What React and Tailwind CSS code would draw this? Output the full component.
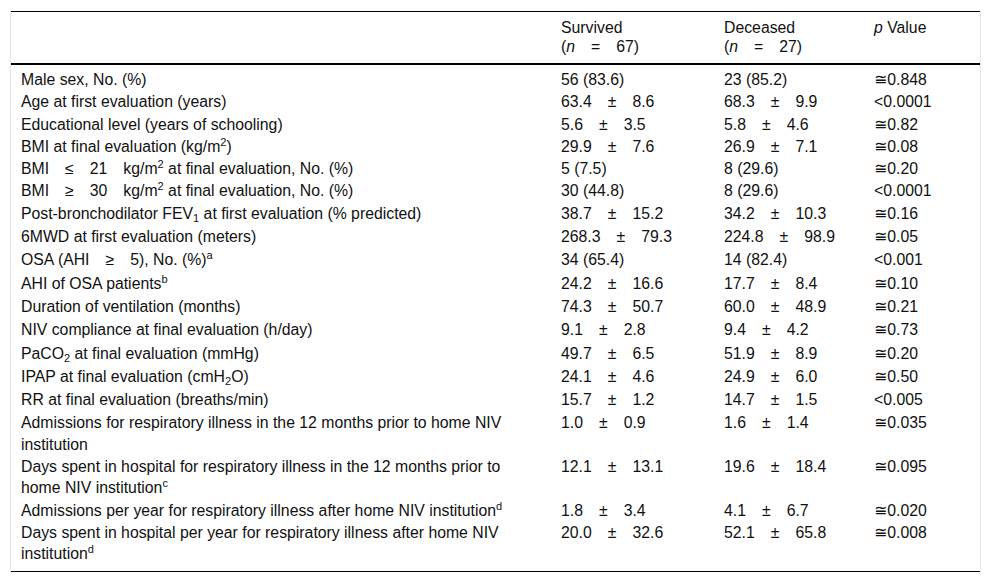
import React from "react";

const Gap = () => <span className="inline-block w-[16px]" />;

const PM = ({ a, b }) => (
  <span className="whitespace-nowrap">
    {a}
    <Gap />±<Gap />
    {b}
  </span>
);

const Sup = ({ children }) => (
  <sup className="text-[11px] relative -top-[6px] align-baseline leading-none">{children}</sup>
);
const Sub = ({ children }) => (
  <sub className="text-[11px] relative top-[3px] align-baseline leading-none">{children}</sub>
);

const rows = [
  { l: "Male sex, No. (%)", s: "56 (83.6)", d: "23 (85.2)", p: "≅0.848" },
  { l: "Age at first evaluation (years)", s: <PM a="63.4" b="8.6" />, d: <PM a="68.3" b="9.9" />, p: "<0.0001" },
  { l: "Educational level (years of schooling)", s: <PM a="5.6" b="3.5" />, d: <PM a="5.8" b="4.6" />, p: "≅0.82" },
  {
    l: (
      <>
        BMI at final evaluation (kg/m<Sup>2</Sup>)
      </>
    ),
    s: <PM a="29.9" b="7.6" />,
    d: <PM a="26.9" b="7.1" />,
    p: "≅0.08",
  },
  {
    l: (
      <>
        BMI<Gap />≤<Gap />21<Gap />kg/m<Sup>2</Sup> at final evaluation, No. (%)
      </>
    ),
    s: "5 (7.5)",
    d: "8 (29.6)",
    p: "≅0.20",
  },
  {
    l: (
      <>
        BMI<Gap />≥<Gap />30<Gap />kg/m<Sup>2</Sup> at final evaluation, No. (%)
      </>
    ),
    s: "30 (44.8)",
    d: "8 (29.6)",
    p: "<0.0001",
  },
  {
    l: (
      <>
        Post-bronchodilator FEV<Sub>1</Sub> at first evaluation (% predicted)
      </>
    ),
    s: <PM a="38.7" b="15.2" />,
    d: <PM a="34.2" b="10.3" />,
    p: "≅0.16",
  },
  { l: "6MWD at first evaluation (meters)", s: <PM a="268.3" b="79.3" />, d: <PM a="224.8" b="98.9" />, p: "≅0.05" },
  {
    l: (
      <>
        OSA (AHI<Gap />≥<Gap />5), No. (%)<Sup>a</Sup>
      </>
    ),
    s: "34 (65.4)",
    d: "14 (82.4)",
    p: "<0.001",
  },
  {
    l: (
      <>
        AHI of OSA patients<Sup>b</Sup>
      </>
    ),
    s: <PM a="24.2" b="16.6" />,
    d: <PM a="17.7" b="8.4" />,
    p: "≅0.10",
  },
  { l: "Duration of ventilation (months)", s: <PM a="74.3" b="50.7" />, d: <PM a="60.0" b="48.9" />, p: "≅0.21" },
  { l: "NIV compliance at final evaluation (h/day)", s: <PM a="9.1" b="2.8" />, d: <PM a="9.4" b="4.2" />, p: "≅0.73" },
  {
    l: (
      <>
        PaCO<Sub>2</Sub> at final evaluation (mmHg)
      </>
    ),
    s: <PM a="49.7" b="6.5" />,
    d: <PM a="51.9" b="8.9" />,
    p: "≅0.20",
  },
  {
    l: (
      <>
        IPAP at final evaluation (cmH<Sub>2</Sub>O)
      </>
    ),
    s: <PM a="24.1" b="4.6" />,
    d: <PM a="24.9" b="6.0" />,
    p: "≅0.50",
  },
  { l: "RR at final evaluation (breaths/min)", s: <PM a="15.7" b="1.2" />, d: <PM a="14.7" b="1.5" />, p: "<0.005" },
  {
    l: "Admissions for respiratory illness in the 12 months prior to home NIV institution",
    s: <PM a="1.0" b="0.9" />,
    d: <PM a="1.6" b="1.4" />,
    p: "≅0.035",
  },
  {
    l: (
      <>
        Days spent in hospital for respiratory illness in the 12 months prior to home NIV institution<Sup>c</Sup>
      </>
    ),
    s: <PM a="12.1" b="13.1" />,
    d: <PM a="19.6" b="18.4" />,
    p: "≅0.095",
  },
  {
    l: (
      <>
        Admissions per year for respiratory illness after home NIV institution<Sup>d</Sup>
      </>
    ),
    s: <PM a="1.8" b="3.4" />,
    d: <PM a="4.1" b="6.7" />,
    p: "≅0.020",
  },
  {
    l: (
      <>
        Days spent in hospital per year for respiratory illness after home NIV institution<Sup>d</Sup>
      </>
    ),
    s: <PM a="20.0" b="32.6" />,
    d: <PM a="52.1" b="65.8" />,
    p: "≅0.008",
  },
];

export default function App() {
  return (
    <div
      className="bg-white w-[992px] h-[583px] pt-[11px] pl-[10px] text-[#111] text-[15.8px]"
      style={{ fontFamily: '"Liberation Sans", Arial, "DejaVu Sans", sans-serif' }}
    >
      <div className="w-[971px] border-x border-[#e6e6e6]">
        <table className="w-full table-fixed border-collapse">
          <colgroup>
            <col className="w-[540px]" />
            <col className="w-[163px]" />
            <col className="w-[150px]" />
            <col />
          </colgroup>
          <thead>
            <tr className="border-t border-black border-b-2 border-b-black text-left align-top leading-[19px]">
              <th className="font-normal pl-[10px] pt-[6px] pb-[7px]">
                <br />
                &nbsp;
              </th>
              <th className="font-normal pl-[10px] pt-[6px] pb-[7px]">
                Survived
                <br />(<i>n</i>
                <Gap />=<Gap />
                67)
              </th>
              <th className="font-normal pl-[10px] pt-[6px] pb-[7px]">
                Deceased
                <br />(<i>n</i>
                <Gap />=<Gap />
                27)
              </th>
              <th className="font-normal pl-[10px] pt-[6px] pb-[7px]">
                <i>p</i> Value
              </th>
            </tr>
          </thead>
          <tbody className="border-b border-black">
            {rows.map((r, i) => {
              const pt = i === 0 ? "pt-[4px]" : "pt-[0.5px]";
              const pb =
                i === rows.length - 1
                  ? "pb-[6.4px]"
                  : i >= 6 && i <= 14
                  ? "pb-[1.5px]"
                  : "pb-[0.5px]";
              const pad = `${pt} ${pb}`;
              return (
                <tr key={i} className="align-top leading-[21.3px]">
                  <td className={`pl-[10px] pr-[20px] ${pad}`}>{r.l}</td>
                  <td className={`pl-[10px] ${pad}`}>{r.s}</td>
                  <td className={`pl-[10px] ${pad}`}>{r.d}</td>
                  <td className={`pl-[10px] ${pad}`}>{r.p}</td>
                </tr>
              );
            })}
          </tbody>
        </table>
      </div>
    </div>
  );
}
